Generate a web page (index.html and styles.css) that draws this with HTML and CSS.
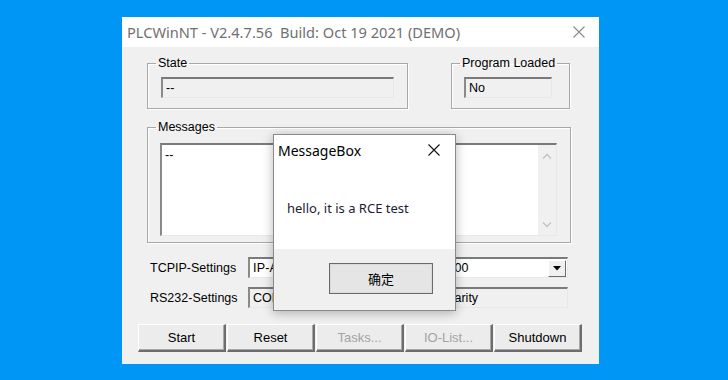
FILE: index.html
```html
<!DOCTYPE html>
<html>
<head>
<meta charset="utf-8">
<link rel="stylesheet" href="styles.css">
</head>
<body>
<div class="stage">
  <div class="window">
    <div class="titlebar">
      <span class="title">PLCWinNT - V2.4.7.56  Build: Oct 19 2021 (DEMO)</span>
      <svg class="close" width="12" height="12" viewBox="0 0 12 12"><path d="M0.5 0.5L11.5 11.5M11.5 0.5L0.5 11.5" stroke="#8a8a8a" stroke-width="1.1" fill="none"/></svg>
    </div>
    <div class="client">
      <div class="row1">
        <fieldset class="group state">
          <legend>State</legend>
          <div class="edit">--</div>
        </fieldset>
        <fieldset class="group loaded">
          <legend>Program Loaded</legend>
          <div class="edit loaded-edit">No</div>
        </fieldset>
      </div>
      <fieldset class="group messages">
        <legend>Messages</legend>
        <div class="memo">
          <div class="memo-text">--</div>
          <div class="vscroll">
            <svg width="10" height="7" viewBox="0 0 10 7"><path d="M1 5.5L5 1.5L9 5.5" stroke="#c2c2c2" stroke-width="1.3" fill="none"/></svg>
            <svg width="10" height="7" viewBox="0 0 10 7"><path d="M1 1.5L5 5.5L9 1.5" stroke="#c2c2c2" stroke-width="1.3" fill="none"/></svg>
          </div>
        </div>
      </fieldset>
      <div class="setting tcp">
        <span class="lbl">TCPIP-Settings</span>
        <div class="combo">
          <span class="combo-text">IP-Address: 192.168.1.100 Port: 3000</span>
          <span class="drop"><svg width="8" height="5" viewBox="0 0 8 5"><path d="M0 0H8L4 4.5Z" fill="#000"/></svg></span>
        </div>
      </div>
      <div class="setting rs">
        <span class="lbl">RS232-Settings</span>
        <div class="edit wide">COM1, 9600 Baud, 8 Databits, No Parity</div>
      </div>
      <div class="buttons">
        <button class="btn">Start</button>
        <button class="btn">Reset</button>
        <button class="btn disabled">Tasks...</button>
        <button class="btn disabled">IO-List...</button>
        <button class="btn">Shutdown</button>
      </div>
    </div>

    <div class="msgbox">
      <div class="mb-title">
        <span>MessageBox</span>
        <svg width="12" height="12" viewBox="0 0 12 12"><path d="M0.5 0.5L11.5 11.5M11.5 0.5L0.5 11.5" stroke="#111" stroke-width="1.1" fill="none"/></svg>
      </div>
      <div class="mb-body">hello, it is a RCE test</div>
      <div class="mb-foot">
        <button class="mb-btn">确定</button>
      </div>
    </div>
  </div>
</div>
</body>
</html>
```

FILE: styles.css
```css
html, body {
  margin: 0;
  padding: 0;
}
body {
  width: 728px;
  height: 380px;
  overflow: hidden;
  background: #0096f5;
  font-family: "Liberation Sans", Arial, sans-serif;
  font-size: 12.5px;
  color: #000;
}
.stage {
  padding: 17px 0 0 122px;
}
.window {
  position: relative;
  width: 477px;
  height: 347px;
  background: #f0f0f0;
}
.titlebar {
  height: 30px;
  background: #fff;
  display: flex;
  align-items: center;
  justify-content: space-between;
  padding: 0 14px 0 5px;
}
.title {
  font-family: "Noto Sans", sans-serif;
  font-size: 14.6px;
  color: #707070;
  white-space: pre;
}
.client {
  padding: 9px 0 0 25px;
}
.row1 {
  display: flex;
  align-items: flex-start;
}
.group {
  margin: 0;
  padding: 7px 13px 10px 13px;
  border: 1px solid #a8a8a8;
  box-shadow: inset 1px 1px 0 #fff, 1px 1px 0 #fff;
  min-width: 0;
}
.group legend {
  margin-left: -5px;
  padding: 0 2px;
  line-height: 14px;
  white-space: nowrap;
}
.state {
  width: 261px;
  box-sizing: border-box;
}
.loaded {
  width: 119px;
  box-sizing: border-box;
  margin-left: 43px;
  padding-left: 12px;
}
.loaded legend {
  margin-left: -4px;
}
.edit {
  height: 21px;
  box-sizing: border-box;
  border-style: solid;
  border-width: 2px 1px 1px 2px;
  border-color: #7a7a7a #e8e8e8 #e8e8e8 #8a8a8a;
  background: #f0f0f0;
  padding: 1px 0 0 3px;
  line-height: 16px;
  white-space: nowrap;
  overflow: hidden;
}
.loaded-edit {
  width: 88px;
}
.messages {
  width: 424px;
  box-sizing: border-box;
  margin-top: 11px;
  padding: 9px 13px 6px 12px;
}
.messages legend {
  margin-left: -4px;
}
.memo {
  height: 93px;
  box-sizing: border-box;
  border-style: solid;
  border-width: 2px 1px 1px 2px;
  border-color: #7a7a7a #e8e8e8 #e8e8e8 #8a8a8a;
  background: #fff;
  display: flex;
}
.memo-text {
  flex: 1;
  padding: 2px 0 0 3px;
  line-height: 16px;
}
.vscroll {
  width: 18px;
  background: #f0f0f0;
  display: flex;
  flex-direction: column;
  justify-content: space-between;
  align-items: center;
  padding: 8px 0 7px;
}
.setting {
  display: flex;
  align-items: center;
  padding-left: 3px;
}
.tcp {
  margin-top: 14px;
}
.rs {
  margin-top: 9px;
}
.lbl {
  width: 98px;
  flex: none;
}
.combo {
  width: 320px;
  height: 21px;
  box-sizing: border-box;
  border-style: solid;
  border-width: 2px 1px 1px 2px;
  border-color: #7a7a7a #e8e8e8 #e8e8e8 #8a8a8a;
  background: #fff;
  display: flex;
  align-items: center;
  justify-content: space-between;
  padding-left: 3px;
}
.combo-text {
  white-space: nowrap;
  letter-spacing: 0.16px;
}
.drop {
  width: 18px;
  height: 17px;
  box-sizing: border-box;
  background: #f0f0f0;
  border-style: solid;
  border-width: 1px;
  border-color: #fff #6a6a6a #6a6a6a #fff;
  display: flex;
  align-items: center;
  justify-content: center;
  margin-right: 1px;
}
.wide {
  width: 320px;
}
.buttons {
  display: flex;
  margin: 16px 0 0 -9px;
  gap: 1px;
}
.btn {
  width: 88px;
  height: 28px;
  box-sizing: border-box;
  font-family: "Liberation Sans", Arial, sans-serif;
  font-size: 13px;
  color: #000;
  background: #ececec;
  border-style: solid;
  border-width: 1px 2px 2px 1px;
  border-color: #fff #6d6d6d #6d6d6d #fff;
  box-shadow: inset -1px -1px 0 #a8a8a8;
  padding: 0;
}
.btn.disabled {
  color: #a3a3a3;
}
.msgbox {
  position: absolute;
  left: 151px;
  top: 117px;
  width: 183px;
  height: 177px;
  box-sizing: border-box;
  border: 1px solid #8a8a8a;
  background: #fff;
  box-shadow: 0 2px 10px rgba(0, 0, 0, 0.28);
  display: flex;
  flex-direction: column;
  font-family: "Noto Sans", sans-serif;
}
.mb-title {
  height: 30px;
  display: flex;
  align-items: center;
  justify-content: space-between;
  padding: 0 15px 0 4px;
  font-size: 14px;
  color: #000;
}
.mb-body {
  height: 84px;
  box-sizing: border-box;
  padding: 34px 0 0 13px;
  font-size: 13px;
  color: #1c1c34;
  line-height: 18px;
}
.mb-foot {
  flex: 1;
  background: #f0f0f0;
  padding: 14px 0 0 55px;
}
.mb-btn {
  width: 104px;
  height: 31px;
  box-sizing: border-box;
  border: 1px solid #6a6a6a;
  box-shadow: inset 0 0 0 1px #d9d9d9;
  background: #e5e5e5;
  font-family: "Noto Sans CJK SC", sans-serif;
  font-size: 13px;
  color: #000;
  padding: 0;
}
```
